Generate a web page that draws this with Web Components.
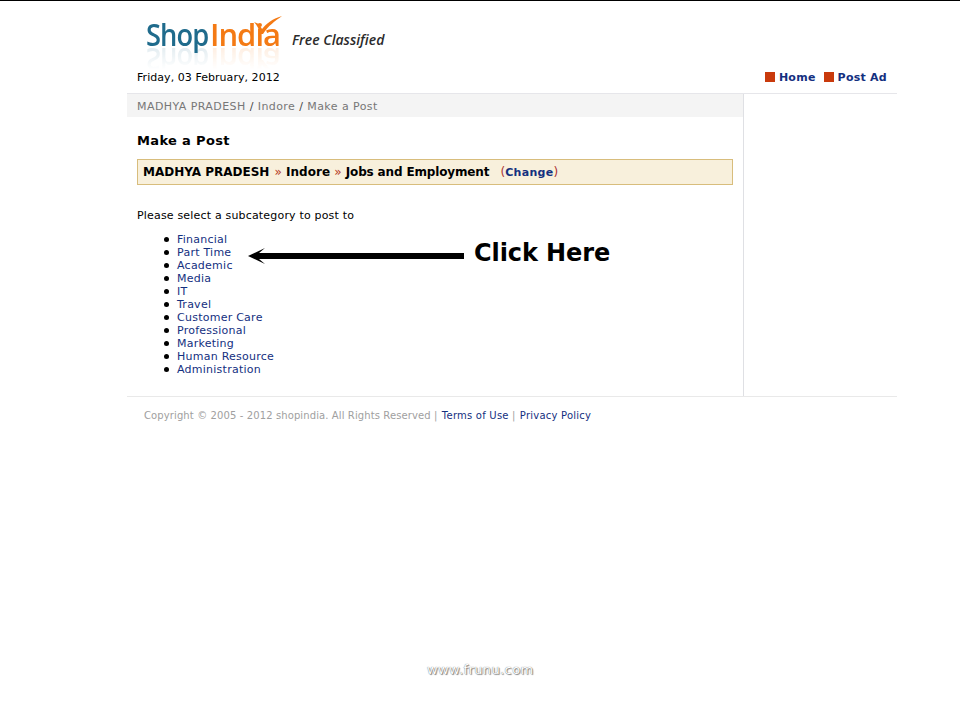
<!DOCTYPE html>
<html>
<head>
<meta charset="utf-8">
<title>ShopIndia Free Classified</title>
<style>
    html, body {
        margin: 0;
        background: #fff;
    }

    body {
        border-top: 1px solid #000;
        font-family: "DejaVu Sans", Verdana, sans-serif;
        font-size: 11px;
        color: #000;
        height: 719px;
        position: relative;
        overflow: hidden;
    }
</style>
</head>
<body>

<si-page>
    <si-header slot="header"></si-header>
    <si-crumbs slot="crumbs">
        <a>MADHYA PRADESH</a> / <a>Indore</a> / <a>Make a Post</a>
    </si-crumbs>
    <si-post-form slot="main"></si-post-form>
    <si-footer slot="footer"></si-footer>
</si-page>

<si-watermark>www.frunu.com</si-watermark>

<script>
const LINK = '#14307f';

class SiPage extends HTMLElement {

    constructor() {

        super();

        this.attachShadow({mode: 'open'}).innerHTML = `
            <style>
                :host {
                    display: block;
                    width: 770px;
                    margin-left: 127px;
                }

                #columns {
                    display: grid;
                    grid-template-columns: 617px 1fr;
                    border-top: 1px solid #e6e6ea;
                    border-bottom: 1px solid #e9e9e9;
                }

                #content {
                    height: 302px;
                    border-right: 1px solid #dfe0e4;
                }
            </style>
            <slot name="header"></slot>
            <div id="columns">
                <div id="content">
                    <slot name="crumbs"></slot>
                    <slot name="main"></slot>
                </div>
                <div></div>
            </div>
            <slot name="footer"></slot>
        `;
    }
}

class SiHeader extends HTMLElement {

    constructor() {

        super();

        this.attachShadow({mode: 'open'}).innerHTML = `
            <style>
                :host {
                    display: block;
                    height: 92px;
                    box-sizing: border-box;
                    padding: 0 10px 0 10px;
                }

                #brand {
                    display: flex;
                    align-items: flex-start;
                    height: 66px;
                    padding-left: 9px;
                }

                #logo {
                    position: relative;
                    margin-top: 14px;
                    font: 600 31px/38px "Open Sans", sans-serif;
                    letter-spacing: -1px;
                    white-space: nowrap;
                    -webkit-box-reflect: below -12px linear-gradient(transparent 25%, rgba(255, 255, 255, .16));
                }

                #shop {
                    display: inline-block;
                    color: #1f6b8c;
                    transform: scaleX(.88);
                    transform-origin: left;
                    margin-right: -7px;
                }

                #india { color: #f47a14; }

                #tick {
                    position: absolute;
                    left: 107px;
                    top: 1px;
                }

                #tag {
                    margin: 24px 0 0 12px;
                    font: italic 600 14px/30px "Open Sans", sans-serif;
                    color: #2b2b2b;
                }

                #bar {
                    display: flex;
                    justify-content: space-between;
                    align-items: center;
                    height: 20px;
                    letter-spacing: .05px;
                }

                nav {
                    display: flex;
                    font-weight: bold;
                    color: ${LINK};
                    font-size: 11px;
                    letter-spacing: .25px;
                }

                nav span {
                    display: flex;
                    align-items: center;
                    gap: 4px;
                    margin-left: 8px;
                }

                nav i {
                    width: 10px;
                    height: 10px;
                    background: #c93a0c;
                }
            </style>
            <div id="brand">
                <div id="logo">
                    <span id="shop">Shop</span><span id="india">India</span>
                    <svg id="tick" width="30" height="18" viewBox="0 0 30 18">
                        <path d="M1 6 L6 8 L9 13 C13 8 19 3 29 0 C22 5 15 10 10 18 L7 18 C6 13 4 9 1 6 Z" fill="#f47a14"></path>
                    </svg>
                </div>
                <div id="tag">Free Classified</div>
            </div>
            <div id="bar">
                <div>Friday, 03 February, 2012</div>
                <nav>
                    <span><i></i>Home</span>
                    <span><i></i>Post Ad</span>
                </nav>
            </div>
        `;
    }
}

class SiCrumbs extends HTMLElement {

    constructor() {

        super();

        this.attachShadow({mode: 'open'}).innerHTML = `
            <style>
                :host {
                    display: block;
                    height: 23px;
                    box-sizing: border-box;
                    padding: 0 10px;
                    line-height: 26px;
                    background: #f4f4f4;
                    color: #444;
                    letter-spacing: .43px;
                }

                ::slotted(a) {
                    color: #777;
                }
            </style>
            <slot></slot>
        `;
    }
}

class SiPostForm extends HTMLElement {

    static get subcategories() {

        return [
            'Financial', 'Part Time', 'Academic', 'Media', 'IT', 'Travel',
            'Customer Care', 'Professional', 'Marketing', 'Human Resource',
            'Administration'
        ];
    }

    constructor() {

        super();

        const items = SiPostForm.subcategories
            .map((name) => `<li><a>${name}</a></li>`)
            .join('');

        this.attachShadow({mode: 'open'}).innerHTML = `
            <style>
                :host {
                    display: block;
                    position: relative;
                    padding: 0 10px;
                }

                h1 {
                    margin: 0;
                    padding-top: 15px;
                    font-size: 13px;
                    line-height: 18px;
                    letter-spacing: .35px;
                }

                #path {
                    height: 24px;
                    margin-top: 9px;
                    padding-left: 5px;
                    background: #f8f0dc;
                    border: 1px solid #d8bd7c;
                    font-weight: bold;
                    font-size: 12px;
                    line-height: 25px;
                    white-space: nowrap;
                }

                #path em {
                    font-style: normal;
                    font-weight: normal;
                    color: #b5391c;
                }

                #path em:first-of-type {
                    margin-left: 1px;
                }

                #path b {
                    letter-spacing: -.15px;
                }

                #path a {
                    color: ${LINK};
                    font-size: 11px;
                    font-weight: bold;
                    letter-spacing: .3px;
                }

                #path small {
                    font-size: 12px;
                    font-weight: normal;
                    color: #a33;
                    margin-left: 7px;
                }

                p {
                    margin: 24px 0 0;
                    line-height: 14px;
                    letter-spacing: .18px;
                }

                ul {
                    margin: 10px 0 0;
                    padding: 0 0 0 40px;
                    line-height: 13px;
                    letter-spacing: .25px;
                    list-style: none;
                }

                li {
                    position: relative;
                }

                li::before {
                    content: "";
                    position: absolute;
                    left: -13px;
                    top: 4px;
                    width: 5px;
                    height: 5px;
                    border-radius: 50%;
                    background: #000;
                }

                li a {
                    color: ${LINK};
                }

                #arrow {
                    position: absolute;
                    left: 121px;
                    top: 129px;
                }

                #hint {
                    position: absolute;
                    left: 347px;
                    top: 121px;
                    font-size: 24px;
                    font-weight: bold;
                    line-height: 30px;
                    letter-spacing: -.1px;
                }
            </style>
            <h1>Make a Post</h1>
            <div id="path">MADHYA PRADESH <em>»</em> Indore <em>»</em> <b>Jobs and Employment</b> <small>(<a>Change</a>)</small></div>
            <p>Please select a subcategory to post to</p>
            <ul>${items}</ul>
            <svg id="arrow" width="216" height="20" viewBox="0 0 216 20">
                <path d="M0 10 L17 2 L11 7 L216 7 L216 13 L11 13 L17 18 Z" fill="#000"></path>
            </svg>
            <div id="hint">Click Here</div>
        `;
    }
}

class SiFooter extends HTMLElement {

    constructor() {

        super();

        this.attachShadow({mode: 'open'}).innerHTML = `
            <style>
                :host {
                    display: block;
                    padding: 12px 0 0 17px;
                    font-size: 10px;
                    line-height: 14px;
                    color: #a0a0a0;
                    letter-spacing: .11px;
                }

                a {
                    color: ${LINK};
                    letter-spacing: .23px;
                }

                i {
                    font-style: normal;
                    margin-right: 1px;
                }
            </style>
            Copyright © 2005 - 2012 shopindia. All Rights Reserved <i>|</i> <a>Terms of Use</a> <i>|</i> <a>Privacy Policy</a>
        `;
    }
}

class SiWatermark extends HTMLElement {

    constructor() {

        super();

        this.attachShadow({mode: 'open'}).innerHTML = `
            <style>
                :host {
                    position: absolute;
                    left: 427px;
                    top: 661px;
                    font-size: 13px;
                    line-height: 16px;
                    letter-spacing: .4px;
                    color: #fff;
                    text-shadow: 0 0 1px #555, 1px 1px 1px #888;
                }
            </style>
            <slot></slot>
        `;
    }
}

window.customElements.define('si-page', SiPage);
window.customElements.define('si-header', SiHeader);
window.customElements.define('si-crumbs', SiCrumbs);
window.customElements.define('si-post-form', SiPostForm);
window.customElements.define('si-footer', SiFooter);
window.customElements.define('si-watermark', SiWatermark);
</script>
</body>
</html>
